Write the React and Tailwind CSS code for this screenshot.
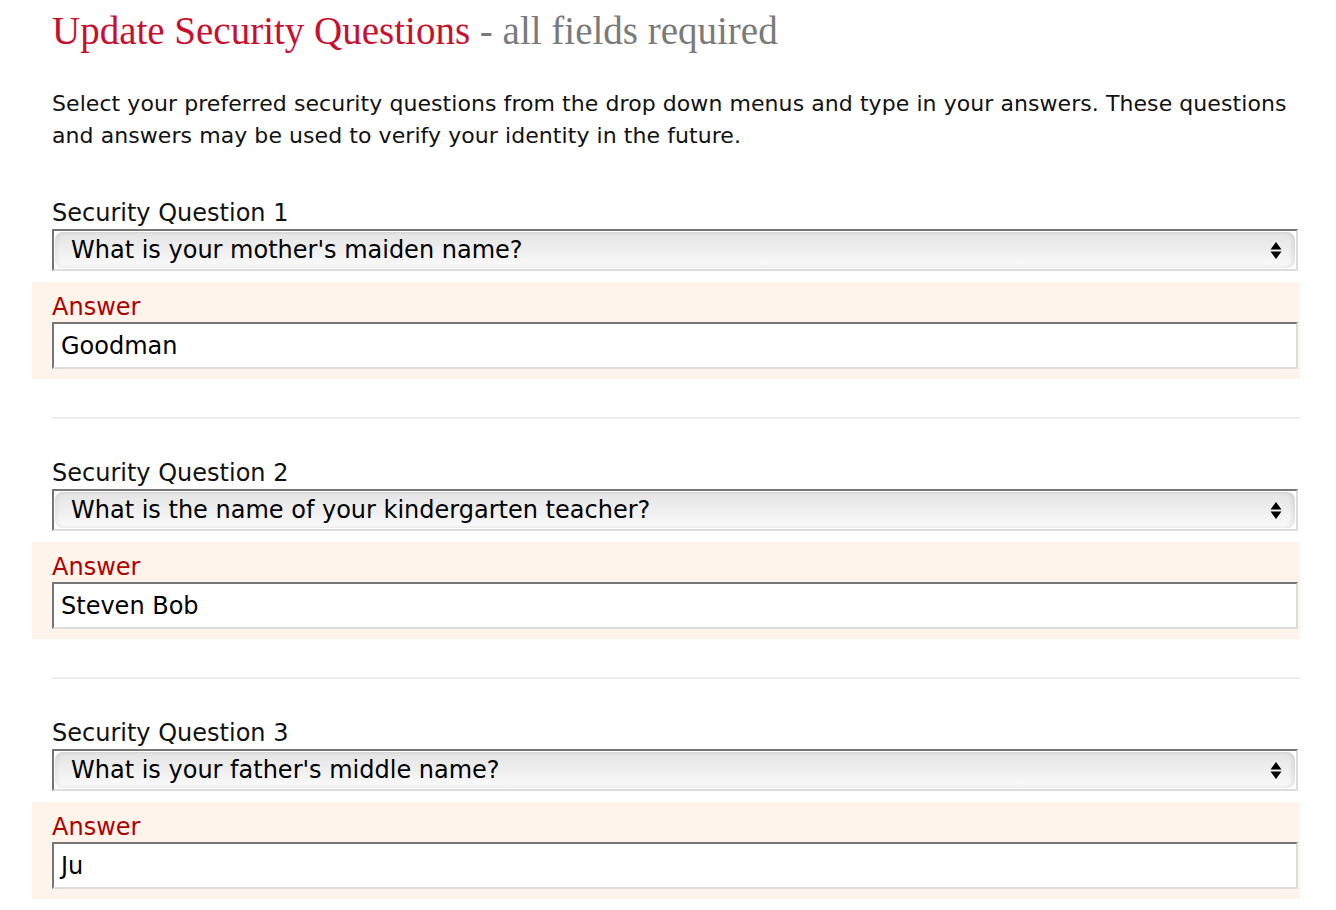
import React from 'react';

const questions = [
  { n: 1, q: "What is your mother's maiden name?", a: 'Goodman' },
  { n: 2, q: 'What is the name of your kindergarten teacher?', a: 'Steven Bob' },
  { n: 3, q: "What is your father's middle name?", a: 'Ju' },
];

function Arrows() {
  return (
    <svg width="12" height="19" viewBox="0 0 12 19" className="shrink-0">
      <path d="M6 1 L11.5 8.5 L0.5 8.5 Z" fill="#000" />
      <path d="M0.5 10.5 L11.5 10.5 L6 18 Z" fill="#000" />
    </svg>
  );
}

function Question({ n, q, a, last }) {
  return (
    <div>
      <div className="text-[24px] leading-[24px] text-[#111] pl-[20px]">Security Question {n}</div>
      <div className="mt-[4px] ml-[20px] mr-[2px] h-[42px] bg-white border-2 border-t-[#767676] border-l-[#767676] border-r-[#dcdcdc] border-b-[#dcdcdc] p-[1px]">
        <div className="h-full rounded-[8px] bg-gradient-to-b from-[#e4e4e4] via-[#efefef] to-[#fbfbfb] flex items-center pl-[16px] pr-[13px] shadow-[inset_-3px_0_4px_rgba(0,0,0,0.08),inset_3px_0_4px_rgba(0,0,0,0.05)]">
          <span className="flex-1 text-[24px] leading-[24px] text-black">{q}</span>
          <Arrows />
        </div>
      </div>
      <div className="mt-[11px] bg-[#fef4ec] pt-[13px] pb-[10px] pl-[20px] pr-[2px]">
        <div className="text-[24px] leading-[24px] text-[#b00000]">Answer</div>
        <div className="mt-[3px] h-[47px] bg-white border-2 border-t-[#767676] border-l-[#767676] border-r-[#dcdcdc] border-b-[#dcdcdc] flex items-center pl-[7px] text-[24px] leading-[24px] text-black">
          {a}
        </div>
      </div>
      {!last && <div className="ml-[20px] mt-[38px] mb-[42px] h-[2px] bg-[#ececec]" />}
    </div>
  );
}

export default function App() {
  return (
    <div className="min-h-[910px] bg-white" style={{ fontFamily: '"DejaVu Sans", Verdana, sans-serif' }}>
      <div className="w-[1268px] ml-[32px]">
        <h1 className="pl-[20px] pt-[8px] text-[39px] leading-[46px]" style={{ fontFamily: '"Liberation Serif", Georgia, serif' }}>
          <span className="text-[#c8102e]">Update Security Questions</span>
          <span className="text-[#7a7a7a]"> - all fields required</span>
        </h1>
        <p className="pl-[20px] mt-[34px] text-[22px] leading-[32px] tracking-[0.07px] text-[#111]">
          Select your preferred security questions from the drop down menus and type in your answers. These questions
          <br />
          and answers may be used to verify your identity in the future.
        </p>
        <div className="mt-[49px]">
          {questions.map((x, i) => (
            <Question key={x.n} {...x} last={i === questions.length - 1} />
          ))}
        </div>
      </div>
    </div>
  );
}
